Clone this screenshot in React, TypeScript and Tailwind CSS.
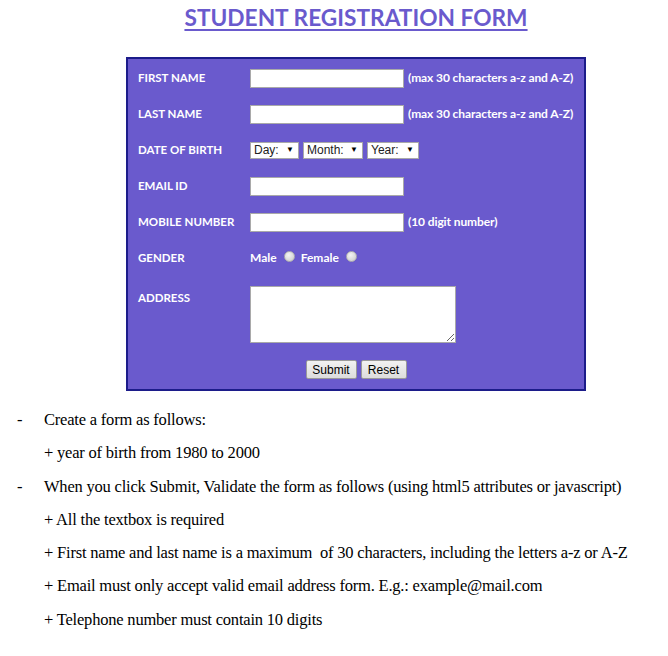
import React from "react";

const label = "text-white font-bold text-[11.5px] leading-none";
const inputCls = "w-[154px] h-[19px] bg-white border border-[#a9a9a9] box-border";
const hint = "text-white font-bold text-[12px] ml-[4px] leading-none tracking-[-0.1px]";

function Sel({ text, w }: { text: string; w: string }) {
  return (
    <div
      className={`${w} h-[17px] bg-white border border-[#a9a9a9] box-border flex items-center justify-between pl-[3px] pr-[4px] text-[12px] text-[#222]`}
      style={{ fontFamily: '"Liberation Sans", Arial, sans-serif' }}
    >
      <span>{text}</span>
      <span className="text-[8px] text-black">▼</span>
    </div>
  );
}

function Radio() {
  return (
    <span className="inline-block w-[11px] h-[11px] rounded-full border border-[#b0b0b0] bg-[radial-gradient(circle_at_40%_35%,#f4f4f4,#c8c8c8)] ml-[7px] mr-[6px] -translate-y-[2px]" />
  );
}

function Btn({ children, w }: { children: React.ReactNode; w: string }) {
  return (
    <div
      className={`${w} h-[19px] border border-[#9a9a9a] bg-[linear-gradient(#f2f2f2,#dcdcdc)] flex items-center justify-center text-[12px] text-black rounded-[2px]`}
      style={{ fontFamily: '"Liberation Sans", Arial, sans-serif' }}
    >
      {children}
    </div>
  );
}

export default function App() {
  const lines: { dash?: boolean; text: string }[] = [
    { dash: true, text: "Create a form as follows:" },
    { text: "+ year of birth from 1980 to 2000" },
    { dash: true, text: "When you click Submit, Validate the form as follows (using html5 attributes or javascript)" },
    { text: "+ All the textbox is required" },
    { text: "+ First name and last name is a maximum  of 30 characters, including the letters a-z or A-Z" },
    { text: "+ Email must only accept valid email address form. E.g.: example@mail.com" },
    { text: "+ Telephone number must contain 10 digits" },
  ];
  return (
    <div className="w-[668px] h-[656px] bg-white overflow-hidden">
      <div className="ml-[126px] w-[460px]" style={{ fontFamily: 'Lato, "Open Sans", sans-serif' }}>
        <div className="h-[57px] flex justify-center pt-[3px]">
          <span className="text-[22.7px] font-bold text-[#6a5acd] underline decoration-[2px] underline-offset-[3px] leading-[30px]">
            STUDENT REGISTRATION FORM
          </span>
        </div>
        <div className="border-2 border-[#1c1c8a] bg-[#6a5acd] pt-[1px] pb-[10px]">
          <div className="grid grid-cols-[112px_1fr] pl-[10px]">
            <div className={`h-[36px] flex items-center ${label}`}>FIRST NAME</div>
            <div className="h-[36px] flex items-center">
              <div className={inputCls} />
              <span className={hint}>(max 30 characters a-z and A-Z)</span>
            </div>
            <div className={`h-[36px] flex items-center ${label}`}>LAST NAME</div>
            <div className="h-[36px] flex items-center">
              <div className={inputCls} />
              <span className={hint}>(max 30 characters a-z and A-Z)</span>
            </div>
            <div className={`h-[36px] flex items-center ${label}`}>DATE OF BIRTH</div>
            <div className="h-[36px] flex items-center gap-[4px]">
              <Sel text="Day:" w="w-[49px]" />
              <Sel text="Month:" w="w-[60px]" />
              <Sel text="Year:" w="w-[52px]" />
            </div>
            <div className={`h-[36px] flex items-center ${label}`}>EMAIL ID</div>
            <div className="h-[36px] flex items-center">
              <div className={inputCls} />
            </div>
            <div className={`h-[36px] flex items-center ${label}`}>MOBILE NUMBER</div>
            <div className="h-[36px] flex items-center">
              <div className={inputCls} />
              <span className={hint}>(10 digit number)</span>
            </div>
            <div className={`h-[36px] flex items-center ${label}`}>GENDER</div>
            <div className="h-[36px] flex items-center text-white font-bold text-[12px]">
              <span>Male</span>
              <Radio />
              <span>Female</span>
              <Radio />
            </div>
            <div className={`pt-[16px] ${label}`}>ADDRESS</div>
            <div className="pt-[10px]">
              <textarea
                className="block w-[206px] h-[57px] bg-white border border-[#a9a9a9] outline-none"
                readOnly
              />
            </div>
          </div>
          <div className="flex justify-center gap-[4px] mt-[17px]">
            <Btn w="w-[51px]">Submit</Btn>
            <Btn w="w-[46px]">Reset</Btn>
          </div>
        </div>
      </div>
      <div
        className="mt-[19px] text-[16.5px] text-black leading-[20px]"
        style={{ fontFamily: '"Liberation Serif", "Times New Roman", serif' }}
      >
        {lines.map((l, i) => (
          <div key={i} className="flex h-[33.3px] items-start">
            <span className="w-[44px] pl-[17px]">{l.dash ? "-" : ""}</span>
            <span className="whitespace-pre tracking-[-0.2px]">{l.text}</span>
          </div>
        ))}
      </div>
    </div>
  );
}
